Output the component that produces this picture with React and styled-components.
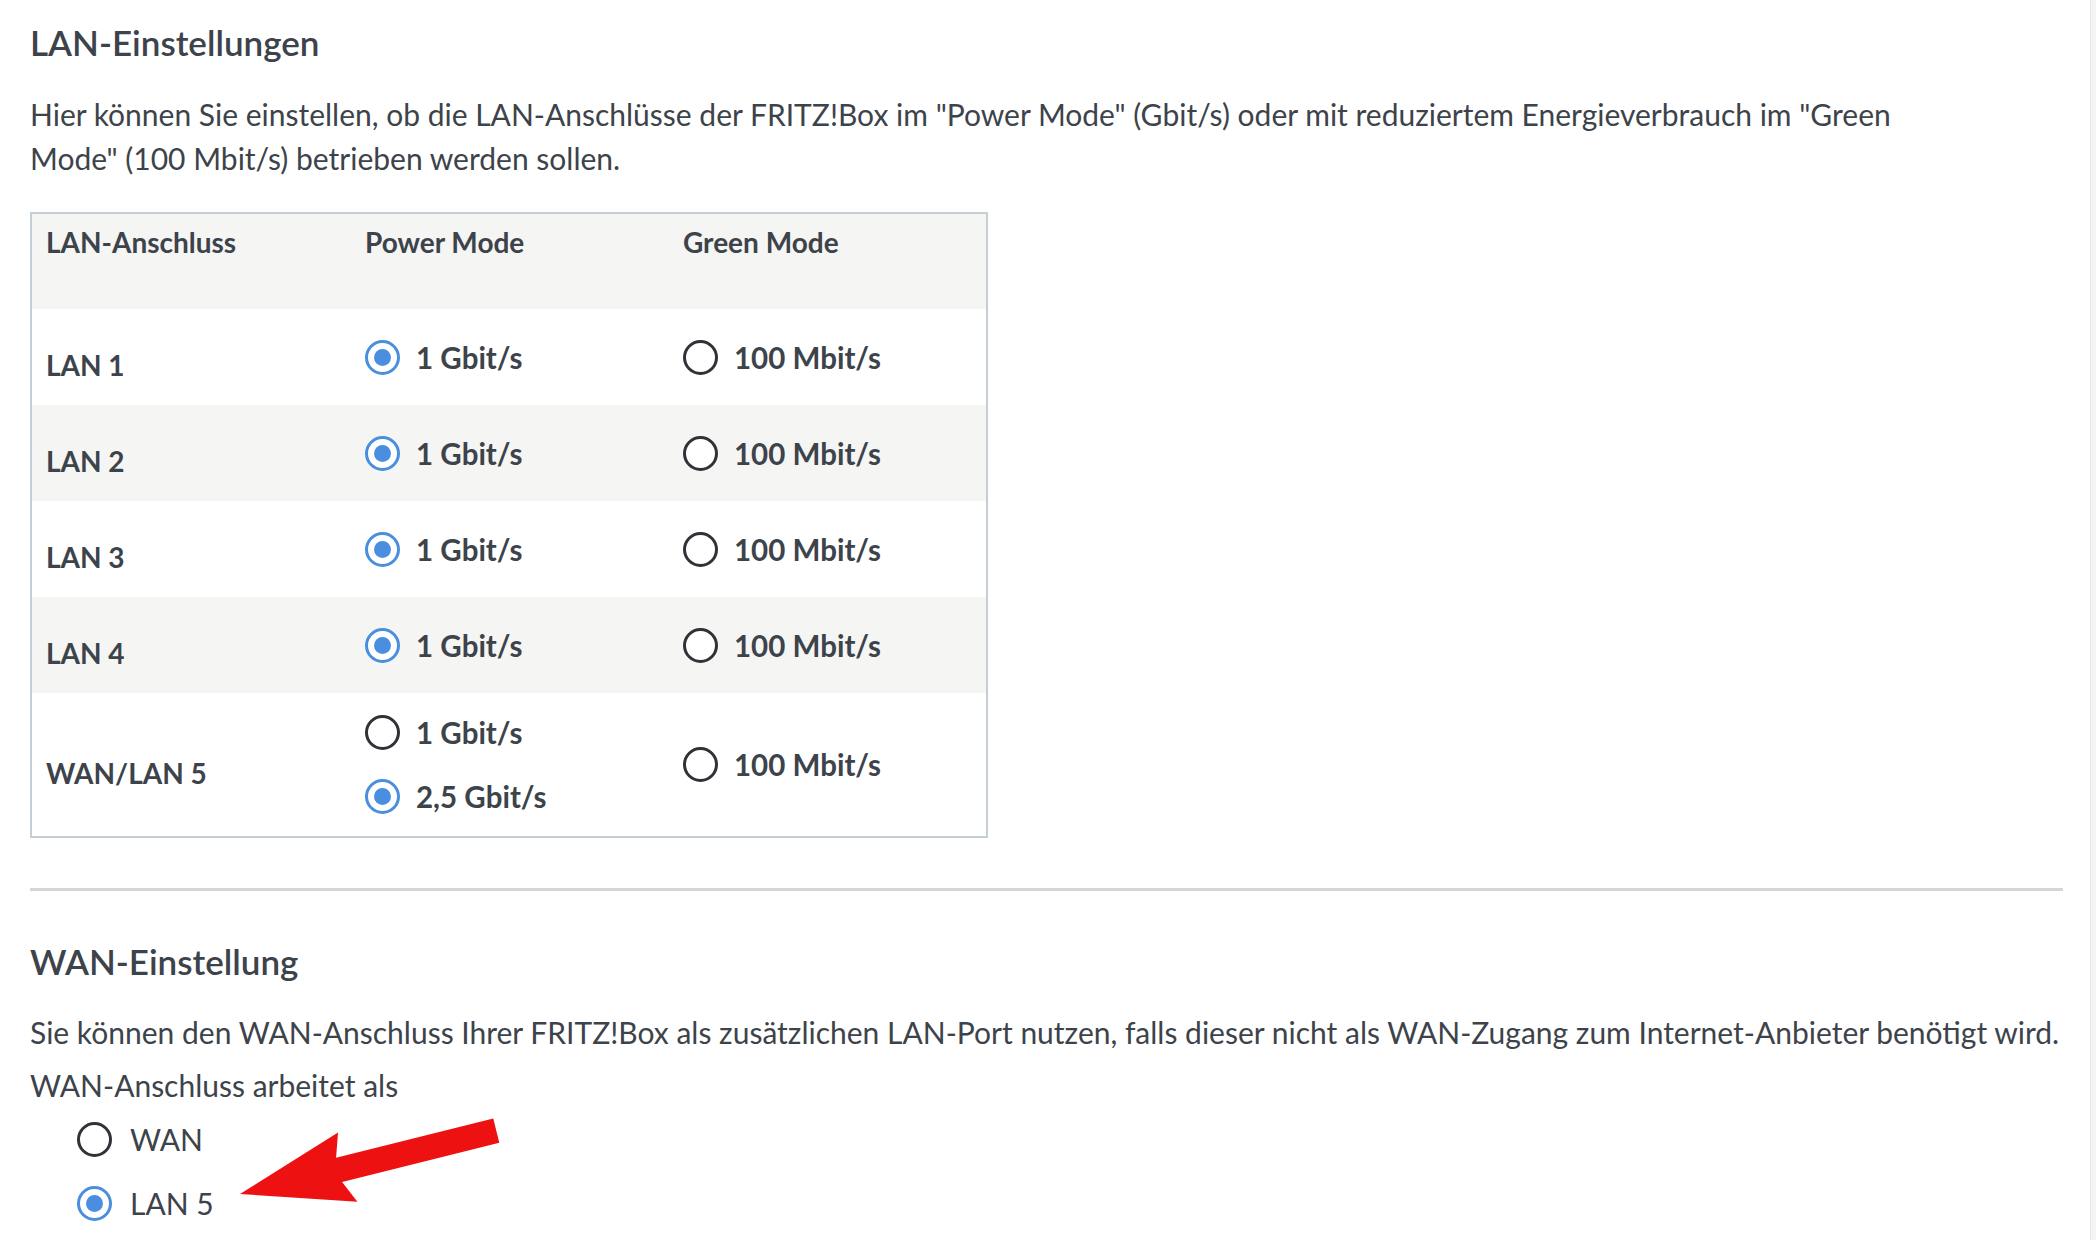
import React from "react";
import styled, { createGlobalStyle } from "styled-components";

const GlobalStyle = createGlobalStyle`
  html, body {
    margin: 0;
    padding: 0;
    background: #ffffff;
  }
  body {
    font-family: Lato, "Open Sans", sans-serif;
    color: #3d434a;
  }
`;

const Shell = styled.div`
  display: flex;
  flex-direction: row;
  width: 2096px;
  min-height: 1240px;
`;

const Content = styled.div`
  position: relative;
  flex: 1;
  padding: 20px 27px 0 30px;
  box-sizing: border-box;
`;

const ScrollTrack = styled.div`
  width: 5px;
  background: #f4f4f4;
  border-left: 1px solid #e6e6e6;
`;

const Heading = styled.h2`
  margin: ${props => props.$top || 0}px 0 0 0;
  font-size: 35px;
  line-height: 44px;
  font-weight: 600;
  color: #3d434a;
`;

const Text = styled.p`
  margin: ${props => props.$top || 0}px 0 0 0;
  max-width: ${props => props.$max || "none"};
  font-size: 30px;
  line-height: 44px;
  font-weight: 400;
`;

const Table = styled.div`
  margin-top: 32px;
  width: 958px;
  box-sizing: border-box;
  border: 2px solid #c3ced5;
  display: flex;
  flex-direction: column;
`;

const Row = styled.div`
  display: grid;
  grid-template-columns: 318px 318px 318px;
  height: ${props => props.$height}px;
  background: ${props => (props.$shaded ? "#f5f5f4" : "#ffffff")};
`;

const HeadCell = styled.div`
  padding: 6px 0 0 ${props => (props.$first ? 14 : 15)}px;
  font-size: 28px;
  line-height: 44px;
  font-weight: 700;
`;

const LabelCell = styled.div`
  display: flex;
  align-items: center;
  padding: 16px 0 0 14px;
  font-size: 28px;
  font-weight: 700;
`;

const OptionCell = styled.div`
  display: flex;
  flex-direction: column;
  justify-content: center;
  gap: 20px;
  padding-left: 15px;
`;

const Option = styled.label`
  display: flex;
  align-items: center;
  gap: ${props => (props.$plain ? 18 : 16)}px;
  height: 44px;
  font-size: ${props => (props.$plain ? 30 : 29.5)}px;
  font-weight: ${props => (props.$plain ? 400 : 700)};
`;

const Radio = styled.span`
  flex: none;
  width: 35px;
  height: 35px;
  box-sizing: border-box;
  border-radius: 50%;
  border: 3px solid ${props => (props.$on ? "#4a8fdf" : "#2f3337")};
  background: #fff;
  display: flex;
  align-items: center;
  justify-content: center;

  &::after {
    content: "";
    display: ${props => (props.$on ? "block" : "none")};
    width: 17px;
    height: 17px;
    border-radius: 50%;
    background: #4a8fdf;
  }
`;

const Divider = styled.hr`
  margin: 50px 0 0 0;
  border: none;
  height: 3px;
  background: #d6d6d6;
`;

const OptionList = styled.div`
  display: flex;
  flex-direction: column;
  gap: 20px;
  margin: 10px 0 0 47px;
`;

const ArrowLayer = styled.svg`
  position: absolute;
  left: 0;
  top: 0;
  width: 600px;
  height: 1240px;
  pointer-events: none;
`;

const lanRows = [
  { name: "LAN 1", power: [{ label: "1 Gbit/s", on: true }] },
  { name: "LAN 2", power: [{ label: "1 Gbit/s", on: true }] },
  { name: "LAN 3", power: [{ label: "1 Gbit/s", on: true }] },
  { name: "LAN 4", power: [{ label: "1 Gbit/s", on: true }] },
  {
    name: "WAN/LAN 5",
    power: [
      { label: "1 Gbit/s", on: false },
      { label: "2,5 Gbit/s", on: true }
    ]
  }
];

const App = () => (
  <Shell>
    <GlobalStyle />
    <Content>
      <Heading>LAN-Einstellungen</Heading>
      <Text $top={28} $max="1900px">
        Hier können Sie einstellen, ob die LAN-Anschlüsse der FRITZ!Box im "Power Mode" (Gbit/s)
        oder mit reduziertem Energieverbrauch im "Green Mode" (100 Mbit/s) betrieben werden sollen.
      </Text>

      <Table>
        <Row $height={95} $shaded>
          <HeadCell $first>LAN-Anschluss</HeadCell>
          <HeadCell>Power Mode</HeadCell>
          <HeadCell>Green Mode</HeadCell>
        </Row>
        {lanRows.map((row, i) => (
          <Row key={row.name} $height={i === 4 ? 143 : 96} $shaded={i % 2 === 1}>
            <LabelCell>{row.name}</LabelCell>
            <OptionCell>
              {row.power.map(opt => (
                <Option key={opt.label}>
                  <Radio $on={opt.on} />
                  {opt.label}
                </Option>
              ))}
            </OptionCell>
            <OptionCell>
              <Option>
                <Radio />
                100 Mbit/s
              </Option>
            </OptionCell>
          </Row>
        ))}
      </Table>

      <Divider />

      <Heading $top={48}>WAN-Einstellung</Heading>
      <Text $top={27}>
        Sie können den WAN-Anschluss Ihrer FRITZ!Box als zusätzlichen LAN-Port nutzen, falls dieser
        nicht als WAN-Zugang zum Internet-Anbieter benötigt wird.
      </Text>
      <Text $top={9}>WAN-Anschluss arbeitet als</Text>
      <OptionList>
        <Option $plain>
          <Radio />
          WAN
        </Option>
        <Option $plain>
          <Radio $on />
          LAN 5
        </Option>
      </OptionList>

      <ArrowLayer viewBox="0 0 600 1240">
        <g transform="translate(240 1194) rotate(-14)">
          <polygon
            points="0,0 110,-36 102,-12 264,-12 264,13 102,13 112,36"
            fill="#ee1111"
          />
        </g>
      </ArrowLayer>
    </Content>
    <ScrollTrack />
  </Shell>
);

export default App;
